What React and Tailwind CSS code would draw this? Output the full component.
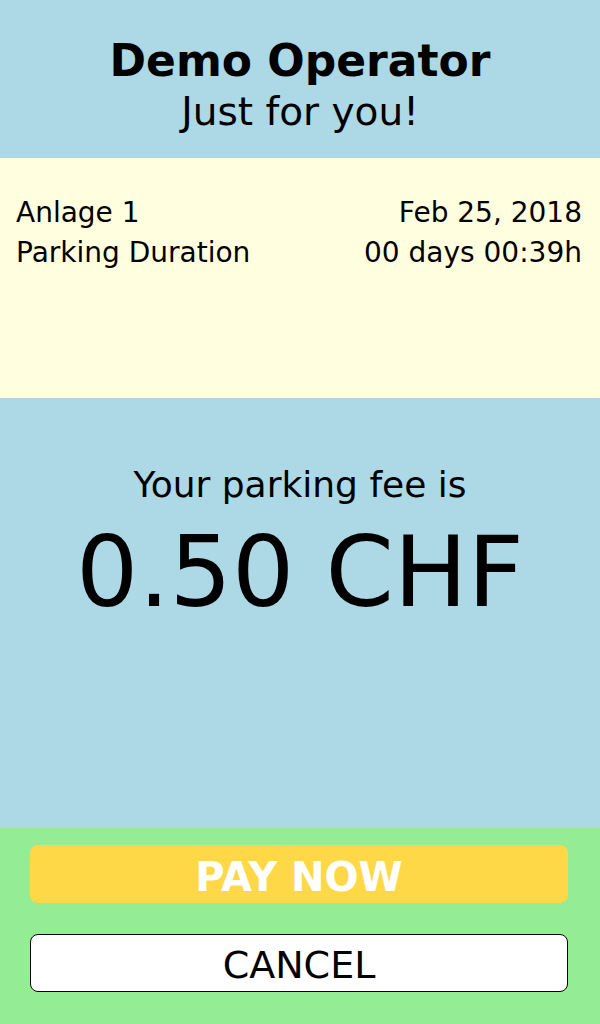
export default function App() {
  const font = { fontFamily: '"DejaVu Sans", Verdana, sans-serif' };

  return (
    <div
      style={font}
      className="w-[600px] h-[1024px] flex flex-col text-black overflow-hidden"
    >
      <header className="h-[158px] bg-[#add8e6] flex flex-col items-center justify-center pt-[16px]">
        <h1 className="text-[44px] leading-[50px] font-bold">Demo Operator</h1>
        <p className="text-[39px] leading-[52px]">Just for you!</p>
      </header>

      <section className="h-[240px] bg-[#ffffe0] pl-[16px] pr-[18px] pt-[35px] text-[28px] leading-[40px]">
        <div className="flex justify-between">
          <span>Anlage 1</span>
          <span>Feb 25, 2018</span>
        </div>
        <div className="flex justify-between">
          <span>Parking Duration</span>
          <span>00 days 00:39h</span>
        </div>
      </section>

      <section className="h-[430px] bg-[#add8e6] flex flex-col items-center pt-[65px]">
        <p className="text-[36px] leading-[44px]">Your parking fee is</p>
        <p className="text-[98px] leading-[110px] mt-[10px]">0.50 CHF</p>
      </section>

      <footer className="flex-1 bg-[#94ec94] pl-[30px] pr-[32px] pt-[17px] flex flex-col gap-[31px]">
        <button className="h-[58px] w-full rounded-[8px] bg-[#ffd848] text-white font-bold text-[40px] leading-none pt-[6px]">
          PAY NOW
        </button>
        <button className="h-[58px] w-full rounded-[8px] bg-white border border-black text-[38px] leading-none pt-[4px]">
          CANCEL
        </button>
      </footer>
    </div>
  );
}
